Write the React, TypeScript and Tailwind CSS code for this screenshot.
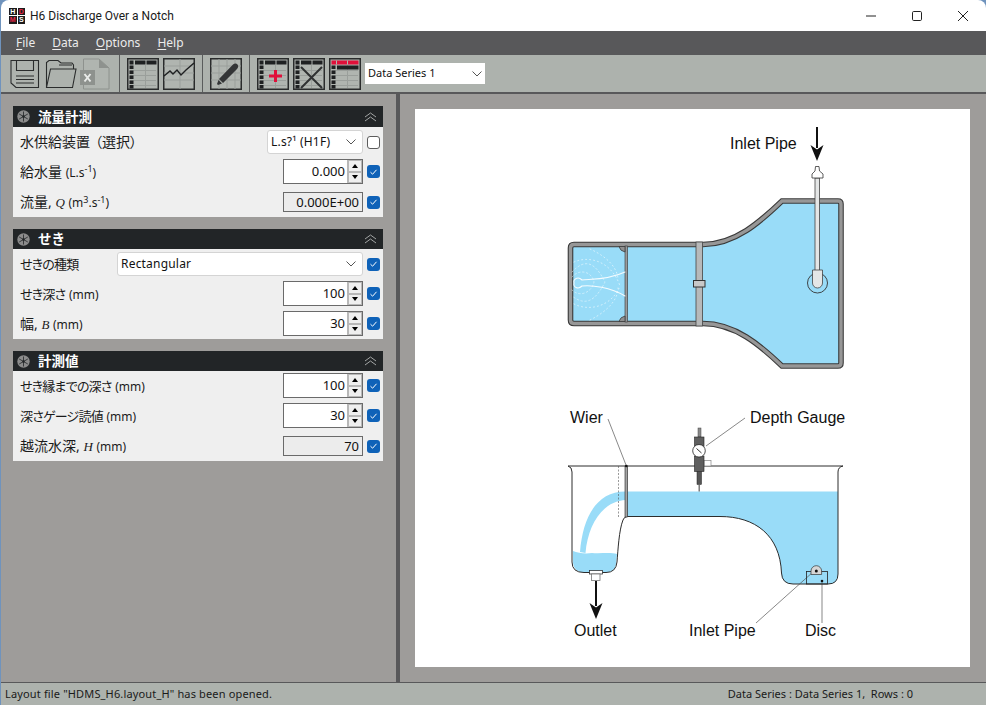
import type { ReactNode } from "react";

const CJK = "font-['Noto_Sans','Noto_Sans_CJK_JP',sans-serif]";

function Menu({ mark, rest }: { mark: string; rest: string }) {
  return (
    <span>
      <span className="underline underline-offset-2">{mark}</span>
      {rest}
    </span>
  );
}

function SheetBase({ children, top = true }: { children?: ReactNode; top?: boolean }) {
  return (
    <svg width="32" height="32" viewBox="0 0 32 32" className="shrink-0">
      <rect x="0.75" y="0.75" width="30.5" height="30.5" fill="#b0b5b0" stroke="#2a2c2c" strokeWidth="1.5" />
      <path d="M3 12.5H29M3 17.5H29M3 22.5H29M3 27.5H29M18.5 7V30" stroke="#9a9f9b" strokeWidth="1" />
      {top && (
        <>
          <rect x="2.5" y="2.5" width="4" height="4" fill="#1f2122" />
          <rect x="8" y="2.5" width="10.5" height="4" fill="#1f2122" />
          <rect x="19.5" y="2.5" width="10" height="4" fill="#1f2122" />
        </>
      )}
      {[7.5, 12.5, 17.5, 22.5, 27].map((y) => (
        <rect key={y} x="2.5" y={y} width="4" height="3.5" fill="#1f2122" />
      ))}
      {children}
    </svg>
  );
}

function ChartIcon() {
  return (
    <svg width="32" height="32" viewBox="0 0 32 32" className="shrink-0">
      <rect x="0.75" y="0.75" width="30.5" height="30.5" fill="#b0b5b0" stroke="#2a2c2c" strokeWidth="1.5" />
      <path d="M1 8H31M1 15H31M1 22H31M17 1V31" stroke="#9a9f9b" strokeWidth="1" />
      <path d="M1 18L7 13L10 16L14 12L18 17L23 12L31 5" fill="none" stroke="#1f2122" strokeWidth="1.4" />
    </svg>
  );
}

function PencilIcon() {
  return (
    <svg width="32" height="32" viewBox="0 0 32 32" className="shrink-0">
      <rect x="0.75" y="0.75" width="30.5" height="30.5" fill="#b0b5b0" stroke="#2a2c2c" strokeWidth="1.5" />
      <path d="M1 8H31M1 15H31M1 22H31M9 1V31M17 1V31M25 1V31" stroke="#9a9f9b" strokeWidth="1" />
      <path d="M9 21L23 6.5C24.5 5 26.5 5 27.5 6.5C28.5 7.5 28.5 9.5 27 11L13 25Z" fill="#333536" />
      <path d="M8.5 22L12 25.5L8 27L7 26Z" fill="#333536" />
    </svg>
  );
}

function SaveIcon() {
  return (
    <svg width="30" height="30" viewBox="0 0 30 30" className="shrink-0">
      <path d="M1 1.5H28.5V28.5H6L1 24Z" fill="none" stroke="#2a2c2c" strokeWidth="1.1" />
      <path d="M6.5 1.5V11.5H23.5V1.5" fill="none" stroke="#2a2c2c" strokeWidth="1.1" />
      <path d="M6 17H24M6 20.5H24M6 24H24" stroke="#2a2c2c" strokeWidth="1.1" />
    </svg>
  );
}

function OpenIcon() {
  return (
    <svg width="32" height="30" viewBox="0 0 32 30" className="shrink-0">
      <path d="M1.5 28V3.5L4 1.5H13L16 4H27L28.5 6V10" fill="none" stroke="#2a2c2c" strokeWidth="1.1" />
      <path d="M1.5 28.5H27.5L31 10H5.5Z" fill="#adb2ad" stroke="#2a2c2c" strokeWidth="1.1" />
      <path d="M14 6H27" stroke="#2a2c2c" strokeWidth="1" />
    </svg>
  );
}

function ExcelIcon() {
  return (
    <svg width="30" height="32" viewBox="0 0 30 32" className="shrink-0">
      <path d="M3.5 1H19L29 10V31H3.5Z" fill="#b0b5b0" stroke="#8e928e" strokeWidth="1" />
      <path d="M19 1V10H29Z" fill="#8e928e" />
      <rect x="0" y="12" width="15" height="15" fill="#8e928e" />
      <path d="M4.5 16L10.5 23.5M10.5 16L4.5 23.5" stroke="#e9ebe9" strokeWidth="2" />
    </svg>
  );
}

function Separator() {
  return <div className="w-px h-[37px] bg-[#5a5c5c] shrink-0" />;
}

function Chevron({ className }: { className: string }) {
  return (
    <svg width="10" height="6" viewBox="0 0 10 6" className={className}>
      <path d="M0.5 0.5L5 5L9.5 0.5" fill="none" stroke="#555" strokeWidth="1" />
    </svg>
  );
}

function Check({ on = true }: { on?: boolean }) {
  if (!on) {
    return <div className="w-[13px] h-[13px] rounded-[3px] border border-[#5c5c5c] bg-white shrink-0" />;
  }
  return (
    <div className="w-[13px] h-[13px] rounded-[3px] bg-[#0f62b8] shrink-0 flex items-center justify-center">
      <svg width="9" height="8" viewBox="0 0 9 8">
        <path d="M1.5 4.2L3.6 6.2L7.5 1.8" fill="none" stroke="#ffffff" strokeWidth="1" />
      </svg>
    </div>
  );
}

function Spin({ value }: { value: string }) {
  return (
    <div className="w-20 h-[25px] border border-[#6a6a6a] bg-white flex items-stretch shrink-0">
      <div className="flex-1 text-right text-[13px] leading-[23px] pr-[2px] text-[#111]">{value}</div>
      <div className="w-[15px] flex flex-col border-l border-[#b8b8b8] bg-[#efefef]">
        <div className="flex-1 flex items-center justify-center border border-[#b8b8b8]">
          <div className="w-0 h-0 border-x-[3px] border-x-transparent border-b-[4px] border-b-black" />
        </div>
        <div className="flex-1 flex items-center justify-center border border-[#b8b8b8]">
          <div className="w-0 h-0 border-x-[3px] border-x-transparent border-t-[4px] border-t-black" />
        </div>
      </div>
    </div>
  );
}

function ReadOnly({ value }: { value: string }) {
  return (
    <div className="w-20 h-5 border border-[#6a6a6a] bg-[#ececec] text-right text-[13px] leading-[18px] pr-[3px] text-[#111] shrink-0">
      {value}
    </div>
  );
}

function Drop({ value, width }: { value: string; width: string }) {
  return (
    <div className={`${width} h-6 rounded-[3px] border border-[#d4d4d4] bg-white flex items-center justify-between pl-[3px] pr-[6px] text-[12px] text-[#111] shrink-0`}>
      <span className="tracking-[0.2px]">{value}</span>
      <Chevron className="shrink-0" />
    </div>
  );
}

function Row({ label, control, check = true, className = "" }: { label: ReactNode; control: ReactNode; check?: boolean; className?: string }) {
  return (
    <div className={`flex items-center justify-between pl-[7px] pr-[3px] ${className}`}>
      <div className="h-5 leading-5 text-[14px] [font-feature-settings:'palt'] text-[#1b1b1b] whitespace-nowrap flex-1">{label}</div>
      <div className="flex items-center gap-1">
        {control}
        <Check on={check} />
      </div>
    </div>
  );
}

function Panel({ title, children, headClass = "h-5", className = "" }: { title: string; children: ReactNode; headClass?: string; className?: string }) {
  return (
    <section className={`w-[370px] ${className}`}>
      <div className={`${headClass} bg-[#222527] flex items-center justify-between pl-1 pr-[6px]`}>
        <div className="flex items-center gap-2">
          <svg width="13" height="13" viewBox="0 0 13 13">
            <circle cx="6.5" cy="6.5" r="6.2" fill="#8c8c8c" />
            <path d="M6.5 1.5V11.5M2.2 4L10.8 9M10.8 4L2.2 9" stroke="#222527" strokeWidth="0.8" />
            <circle cx="6.5" cy="6.5" r="1.2" fill="#222527" />
          </svg>
          <span className="text-white font-bold text-[13.5px] leading-5">{title}</span>
        </div>
        <svg width="13" height="10" viewBox="0 0 13 10">
          <path d="M1 5L6.5 1L12 5M1 9L6.5 5L12 9" fill="none" stroke="#a3a5a5" strokeWidth="1" />
        </svg>
      </div>
      <div className="bg-[#efefef] pt-[3px] pb-[3px]">{children}</div>
    </section>
  );
}

const Unit = ({ children }: { children: ReactNode }) => <span className="text-[12px]">{children}</span>;
const Kana = ({ children }: { children: ReactNode }) => <span className="text-[13px] tracking-[-0.8px]">{children}</span>;
const Ital = ({ children }: { children: ReactNode }) => (
  <i className="font-['Liberation_Serif',serif] text-[13px]">{children}</i>
);

function TopView() {
  const shell =
    "M574 244.5H703C735 244.5 760 222 782 201H838Q841 201 841 204V363Q841 366 838 366H782C760 345 735 323.5 703 323.5H574Q570.5 323.5 570.5 320V248Q570.5 244.5 574 244.5Z";
  return (
    <g>
      <path d={shell} fill="#99dcf8" stroke="#3a3a3a" strokeWidth="5.6" />
      <path d={shell} fill="none" stroke="#979797" strokeWidth="3.4" />
      {/* wier and corner pieces */}
      <rect x="625" y="246" width="2.6" height="76" fill="#9a9a9a" stroke="#333" strokeWidth="0.6" />
      <path d="M619 246.5Q620 251 625 252V246.5Z M619 321.5Q620 317 625 316V321.5Z" fill="#8f8f8f" stroke="#333" strokeWidth="0.7" />
      {/* flow lines */}
      <g fill="none" stroke="#ffffff" strokeLinecap="round">
        <path d="M625 272C608 280 592 279 582 280C578 276 573 279 574 283C573 287 578 290 582 286C592 285 610 287 625 296" strokeWidth="1.1" opacity="0.9" />
        <path d="M574 262C590 255 612 262 620 286M574 304C590 312 612 306 620 286M590 249C610 258 618 270 618 280M590 320C610 310 618 298 618 288" strokeWidth="0.7" strokeDasharray="1 3" opacity="0.8" />
        <path d="M572 272C585 258 595 262 605 282C595 302 585 306 572 296M572 277C580 268 592 272 594 282C592 292 580 298 572 290" strokeWidth="0.6" strokeDasharray="1.5 2.5" opacity="0.8" />
      </g>
      {/* cross bar */}
      <rect x="696" y="242" width="6.6" height="84" fill="#b7b9ba" stroke="#444" strokeWidth="0.8" />
      <rect x="693.5" y="280.5" width="11.5" height="6.5" fill="#c8c8c8" stroke="#333" strokeWidth="1" />
      {/* pipe */}
      <circle cx="817.5" cy="283" r="10" fill="none" stroke="#333" strokeWidth="0.9" />
      <rect x="815" y="178" width="4.6" height="93" fill="#e4e6e6" stroke="#444" strokeWidth="0.8" />
      <path d="M812.5 270H822.5V283A5 5 0 0 1 812.5 283Z" fill="#e4e6e6" stroke="#444" strokeWidth="0.8" />
      <path d="M815.5 166.5H819L819.5 171L823 174V178H812V174L815 171Z" fill="#ffffff" stroke="#333" strokeWidth="0.8" />
      <path d="M817 127V148" stroke="#111" strokeWidth="2" />
      <path d="M810.5 145L817 161L823.5 145L817 149.5Z" fill="#111" />
    </g>
  );
}

function SideView() {
  return (
    <g>
      {/* water */}
      <path d="M627 491.5H838V574Q838 584 828 584H793Q782 584 781.5 573C780 535 755 516.5 720 516.5H627Z" fill="#99dcf8" />
      <path d="M573 551C578 553 585 554 592 553C600 554 610 552 617 554L616 564Q615 572.5 605 572.5H585Q574 572.5 573 563Z" fill="#99dcf8" />
      <path d="M626 491.5C598 491 583 515 580 552L585.5 553C588 525 602 501 626 500Z" fill="#99dcf8" />
      {/* tank outline */}
      <path d="M568 466H843M568 466Q572 467 572 472V562Q572 572.5 584 572.5H606Q616 572.5 617 562C618 550 619 530 623 520Q624 517 627 516.5H720C755 516.5 780 535 781.5 573Q782 584 793 584H828Q838 584 838 574V472Q838 467 843 466" fill="none" stroke="#2c2c2c" strokeWidth="1" />
      <path d="M618.5 466V517" stroke="#555" strokeWidth="0.6" strokeDasharray="2 1.5" />
      <rect x="625" y="466" width="2.6" height="51" fill="#a4a4a4" stroke="#222" strokeWidth="0.6" />
      <circle cx="626.3" cy="466" r="1.3" fill="#111" />
      {/* leaders */}
      <path d="M608 419L626 465M706 446L745 418M756 623L813 572M822 582V623" fill="none" stroke="#555" strokeWidth="0.7" />
      {/* outlet */}
      <rect x="589.5" y="570.5" width="13" height="3.5" fill="#ffffff" stroke="#333" strokeWidth="0.8" />
      <rect x="591.5" y="574" width="8.5" height="6.5" fill="#ffffff" stroke="#777" strokeWidth="0.8" />
      <path d="M596 581V606" stroke="#111" strokeWidth="2" />
      <path d="M589.5 603L596 619L602.5 603L596 607.5Z" fill="#111" />
      {/* depth gauge */}
      <rect x="698" y="428" width="3" height="9" fill="#8a8a8a" stroke="#444" strokeWidth="0.5" />
      <rect x="694.5" y="437" width="9.5" height="10" fill="#5f5f5f" stroke="#222" strokeWidth="0.6" />
      <rect x="704" y="460.5" width="7" height="5.5" fill="#ffffff" stroke="#888" strokeWidth="0.7" />
      <rect x="694.5" y="456" width="9.5" height="15.5" fill="#5f5f5f" stroke="#222" strokeWidth="0.6" />
      <circle cx="699" cy="450.8" r="6.3" fill="#ffffff" stroke="#222" strokeWidth="0.8" />
      <path d="M696.5 448.5L701.5 453" stroke="#333" strokeWidth="1" />
      <rect x="697" y="471.5" width="4.5" height="13" fill="#555" stroke="#222" strokeWidth="0.5" />
      <path d="M699.2 484.5V491.5" stroke="#666" strokeWidth="1.3" />
      {/* inlet pipe and disc */}
      <rect x="806.5" y="571.5" width="21" height="12.5" fill="none" stroke="#222" strokeWidth="0.8" />
      <path d="M811 574.5V571A5.3 5.3 0 0 1 821.6 571V574.5Z" fill="#d6d6d6" stroke="#333" strokeWidth="0.7" />
      <circle cx="816.3" cy="571" r="1.5" fill="#111" />
      <circle cx="822" cy="581" r="1.3" fill="#111" />
    </g>
  );
}

function Diagram() {
  return (
    <svg viewBox="415 109 555 558" width="555" height="558" className="font-['Liberation_Sans',sans-serif]">
      <TopView />
      <SideView />
      <g fontSize="16" fill="#111">
        <text x="730" y="149">Inlet Pipe</text>
        <text x="570" y="423">Wier</text>
        <text x="750" y="423">Depth Gauge</text>
        <text x="574" y="636">Outlet</text>
        <text x="689" y="636">Inlet Pipe</text>
        <text x="805" y="636">Disc</text>
      </g>
    </svg>
  );
}

export default function App() {
  return (
    <div className={`w-[986px] h-[705px] bg-[#6f93bd] overflow-hidden ${CJK}`}>
      <div className="h-full flex flex-col rounded-t-[8px] overflow-hidden ml-px">
        {/* title bar */}
        <header className="h-[31px] bg-white flex items-center shrink-0 pl-2">
          <div className="w-4 h-4 grid grid-cols-2 grid-rows-2 gap-px shrink-0 font-['Liberation_Sans',sans-serif] font-bold text-[7px] leading-[7px] text-center">
            <span className="bg-[#1c1c1c] text-white">H</span>
            <span className="bg-[#1c1c1c] text-[#e8264a]">D</span>
            <span className="bg-[#1c1c1c] text-[#e8264a]">M</span>
            <span className="bg-[#1c1c1c] text-white">S</span>
          </div>
          <span className="ml-[5px] font-['Roboto',sans-serif] text-[12px] text-[#1a1a1a]">H6 Discharge Over a Notch</span>
          <div className="ml-auto flex items-center gap-[36px] pr-[18px]">
            <svg width="10" height="10" viewBox="0 0 10 10">
              <path d="M0 5H10" stroke="#222" strokeWidth="1" />
            </svg>
            <svg width="10" height="10" viewBox="0 0 10 10">
              <rect x="0.5" y="0.5" width="9" height="9" rx="1.2" fill="none" stroke="#222" strokeWidth="1" />
            </svg>
            <svg width="10" height="10" viewBox="0 0 10 10">
              <path d="M0 0L10 10M10 0L0 10" stroke="#222" strokeWidth="1" />
            </svg>
          </div>
        </header>

        {/* menu */}
        <nav className="h-6 bg-[#58585a] flex items-center gap-[17px] pl-[15px] text-[12px] text-[#ececec] shrink-0">
          <Menu mark="F" rest="ile" />
          <Menu mark="D" rest="ata" />
          <Menu mark="O" rest="ptions" />
          <Menu mark="H" rest="elp" />
        </nav>

        {/* toolbar */}
        <div className="h-[39px] bg-[#adb2ad] border-b-2 border-[#58585a] flex items-center pl-[9px] shrink-0">
          <SaveIcon />
          <div className="w-[5px]" />
          <OpenIcon />
          <div className="w-[3px]" />
          <ExcelIcon />
          <div className="w-[9px]" />
          <Separator />
          <div className="w-[7px]" />
          <SheetBase />
          <div className="w-1" />
          <ChartIcon />
          <div className="w-[7px]" />
          <Separator />
          <div className="w-[7px]" />
          <PencilIcon />
          <div className="w-[7px]" />
          <Separator />
          <div className="w-[7px]" />
          <SheetBase>
            <path d="M18.5 12V24M12 18H25" stroke="#e0103a" strokeWidth="3" />
          </SheetBase>
          <div className="w-1" />
          <SheetBase>
            <path d="M8 9L29 30M29 9L8 30" stroke="#2f3132" strokeWidth="2" />
          </SheetBase>
          <div className="w-1" />
          <SheetBase top={false}>
            <rect x="2.5" y="2.5" width="27" height="4" fill="#e0103a" />
            <path d="M7.5 2.5V6.5M18.5 2.5V6.5" stroke="#b0b5b0" strokeWidth="1" />
            <rect x="8" y="7.5" width="21.5" height="4" fill="#1f2122" />
          </SheetBase>
          <div className="w-1" />
          <div className="w-[120px] h-[21px] bg-white flex items-center justify-between pl-[3px] pr-[3px] text-[11px] text-[#111]">
            <span>Data Series 1</span>
            <Chevron className="shrink-0" />
          </div>
        </div>

        {/* main */}
        <main className="flex-1 flex min-h-0 bg-[#9e9c9a]">
          <aside className="w-[395px] pl-3 pt-3 flex flex-col">
            <Panel title="流量計測" headClass="h-[21px]">
              <Row
                label={
                  <>
                    水供給装置<span className="ml-[5px]">（選択）</span>
                  </>
                }
                check={false}
                control={<Drop value="L.s?¹ (H1F)" width="w-24" />}
              />
              <Row
                className="mt-[5px]"
                label={
                  <>
                    給水量 <Unit>(L.s<sup className="text-[9px]">-1</sup>)</Unit>
                  </>
                }
                control={<Spin value="0.000" />}
              />
              <Row
                className="mt-2 mb-[2px]"
                label={
                  <>
                    流量, <Ital>Q</Ital> <Unit>(m<sup className="text-[9px]">3</sup>.s<sup className="text-[9px]">-1</sup>)</Unit>
                  </>
                }
                control={<ReadOnly value="0.000E+00" />}
              />
            </Panel>
            <Panel title="せき" className="mt-3">
              <Row label={<Kana>せきの種類</Kana>} control={<Drop value="Rectangular" width="w-[246px]" />} />
              <Row className="mt-[5px]" label={<><Kana>せき深さ</Kana> <Unit>(mm)</Unit></>} control={<Spin value="100" />} />
              <Row className="mt-[5px]" label={<>幅, <Ital>B</Ital> <Unit>(mm)</Unit></>} control={<Spin value="30" />} />
            </Panel>
            <Panel title="計測値" className="mt-3">
              <Row className="-mt-px" label={<><Kana>せき縁までの深さ</Kana> <Unit>(mm)</Unit></>} control={<Spin value="100" />} />
              <Row className="mt-[5px]" label={<><Kana>深さゲージ読値</Kana> <Unit>(mm)</Unit></>} control={<Spin value="30" />} />
              <Row className="mt-2 mb-[2px]" label={<>越流水深, <Ital>H</Ital> <Unit>(mm)</Unit></>} control={<ReadOnly value="70" />} />
            </Panel>
          </aside>
          <div className="w-1 bg-[#58585a] shrink-0" />
          <div className="flex-1 pl-[15px] pt-[15px]">
            <div className="w-[555px] h-[558px] bg-white">
              <Diagram />
            </div>
          </div>
        </main>

        {/* status bar */}
        <footer className="h-[23px] bg-[#adb2ad] border-t border-[#58585a] flex items-center justify-between pl-1 pr-[73px] text-[11px] text-[#1a1a1a] shrink-0">
          <span className="tracking-[0.15px]">Layout file "HDMS_H6.layout_H" has been opened.</span>
          <span>Data Series : Data Series 1,&nbsp; Rows : 0</span>
        </footer>
      </div>
    </div>
  );
}
